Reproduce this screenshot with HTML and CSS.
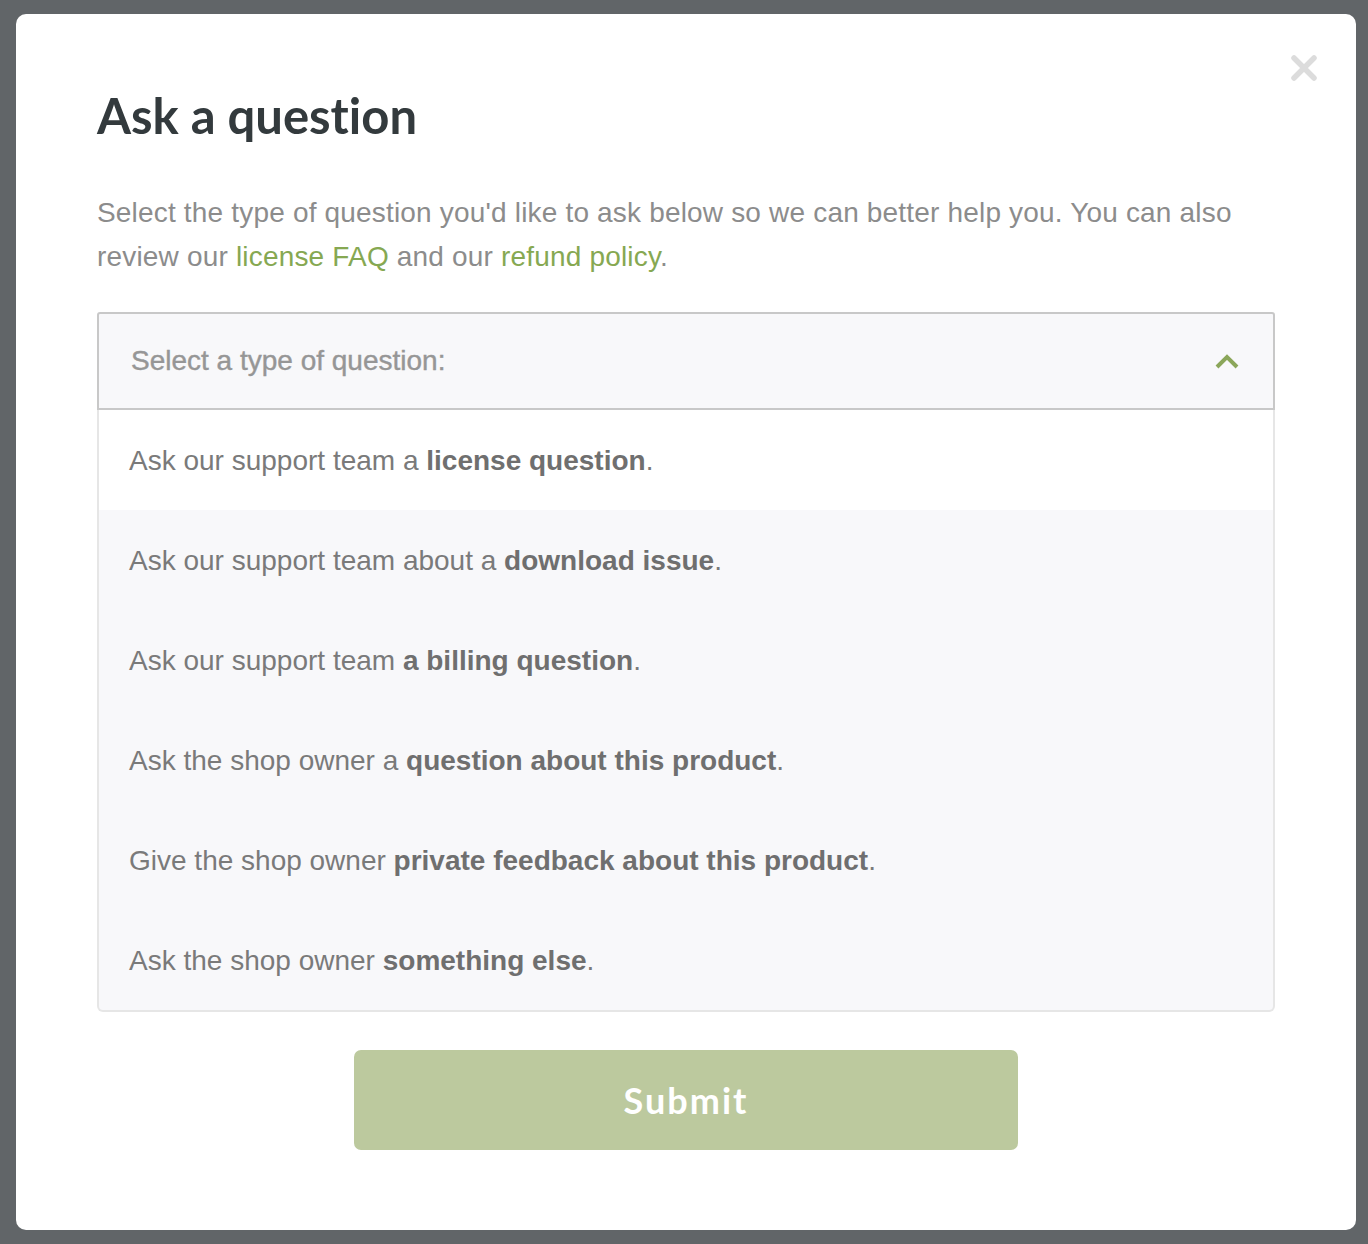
FILE: index.html
```html
<!DOCTYPE html>
<html lang="en">
<head>
<meta charset="utf-8">
<title>Ask a question</title>
<link rel="stylesheet" href="styles.css">
</head>
<body>
<div class="backdrop">
  <div class="modal">
    <button class="close" aria-label="Close">
      <svg width="26" height="26" viewBox="0 0 26 26"><path d="M3 3 L23 23 M23 3 L3 23" stroke="#dcdcdc" stroke-width="5.5" stroke-linecap="round" fill="none"/></svg>
    </button>
    <h1 class="title">Ask a question</h1>
    <p class="intro">Select the type of question you'd like to ask below so we can better help you. You can also review our <a href="#">license FAQ</a> and our <a href="#">refund policy</a>.</p>
    <div class="select">
      <div class="select-head">
        <span>Select a type of question:</span>
        <svg class="chev" width="26" height="16" viewBox="0 0 26 16"><path d="M3 13 L13 3 L23 13" stroke="#8ba65a" stroke-width="4" fill="none"/></svg>
      </div>
      <ul class="options">
        <li class="opt active">Ask our support team a <b>license question</b>.</li>
        <li class="opt">Ask our support team about a <b>download issue</b>.</li>
        <li class="opt">Ask our support team <b>a billing question</b>.</li>
        <li class="opt">Ask the shop owner a <b>question about this product</b>.</li>
        <li class="opt">Give the shop owner <b>private feedback about this product</b>.</li>
        <li class="opt">Ask the shop owner <b>something else</b>.</li>
      </ul>
    </div>
    <div class="actions">
      <button class="submit">Submit</button>
    </div>
  </div>
</div>
</body>
</html>
```
FILE: styles.css
```css
* { box-sizing: border-box; }
html, body { margin: 0; padding: 0; }
body {
  background: #616568;
  font-family: "Liberation Sans", Arial, sans-serif;
}
.backdrop {
  width: 1368px;
  height: 1244px;
  padding: 14px 12px 14px 16px;
  background: #616568;
}
.modal {
  position: relative;
  width: 1340px;
  height: 1216px;
  background: #ffffff;
  border-radius: 10px;
  padding: 72px 81px 80px 81px;
}
.close {
  position: absolute;
  top: 41px;
  right: 39px;
  border: 0;
  background: none;
  padding: 0;
  width: 26px;
  height: 26px;
  cursor: pointer;
}
.close svg { display: block; }
.title {
  margin: 0;
  font-family: Lato, "Open Sans", sans-serif;
  font-weight: 700;
  font-size: 49px;
  line-height: 58px;
  color: #333a3d;
  font-variant-ligatures: none;
}
.intro {
  margin: 47px 0 0 0;
  font-size: 28px;
  line-height: 44px;
  color: #8c8c8c;
  letter-spacing: 0.18px;
}
.intro a {
  color: #86a852;
  text-decoration: none;
}
.select {
  margin-top: 33px;
}
.select-head {
  height: 98px;
  border: 2px solid #c8c8c8;
  border-radius: 3px 3px 0 0;
  background: #f8f8fa;
  display: flex;
  align-items: center;
  justify-content: space-between;
  padding: 0 32px 0 32px;
  font-size: 28px;
  color: #969696;
  -webkit-text-stroke: 0.4px #969696;
}
.chev { display: block; margin-top: 1px; margin-right: 1px; }
.options {
  list-style: none;
  margin: 0;
  padding: 0;
  border: 2px solid #e6e6e6;
  border-top: 0;
  border-radius: 0 0 6px 6px;
  background: #f8f8fa;
  overflow: hidden;
}
.opt {
  height: 100px;
  line-height: 102px;
  padding-left: 30px;
  font-size: 28px;
  color: #7a7a7a;
  white-space: nowrap;
}
.opt.active { background: #ffffff; }
.opt b { color: #6f6f6f; font-weight: 700; }
.actions {
  display: flex;
  justify-content: center;
  margin-top: 38px;
}
.submit {
  width: 664px;
  height: 100px;
  border: 0;
  border-radius: 7px;
  background: #bcc99e;
  color: #ffffff;
  font-family: Lato, "Open Sans", sans-serif;
  font-weight: 700;
  font-size: 36px;
  letter-spacing: 2px;
  cursor: pointer;
}
```
